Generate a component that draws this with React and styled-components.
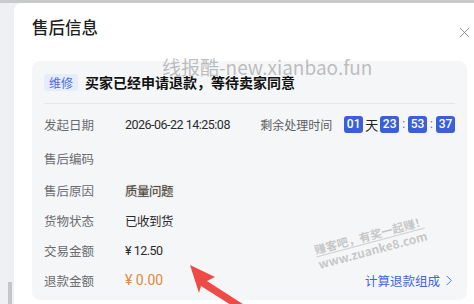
import React from 'react'
import styled, { createGlobalStyle } from 'styled-components'

const FONT = `Roboto, "Noto Sans CJK SC", sans-serif`

const ROWS = [
  { label: '发起日期', value: '2026-06-22 14:25:08', h: 34, timer: true },
  { label: '售后编码', value: '', h: 34 },
  { label: '售后原因', value: '质量问题', h: 31, smudged: true },
  { label: '货物状态', value: '已收到货', h: 29 },
  { label: '交易金额', value: '¥ 12.50', h: 30 },
  { label: '退款金额', value: '¥ 0.00', h: 30, refund: true }
]

const GlobalStyle = createGlobalStyle`
  * { box-sizing: border-box; }
  body {
    margin: 0;
    font-family: ${FONT};
    background: #eef0f3;
  }
`

const App = () => {
  return (
    <>
      <GlobalStyle />
      <Page>
        <SideRail>
          <ScrollThumb />
        </SideRail>

        <Card>
          <TitleRow>
            <Title>售后信息</Title>
            <CloseIcon viewBox='0 0 12 12'>
              <path d='M1 1L11 11M11 1L1 11' stroke='#8a8c90' strokeWidth='1' fill='none' />
            </CloseIcon>
          </TitleRow>

          <Panel>
            <StatusRow>
              <Tag>维修</Tag>
              <StatusText>买家已经申请退款，等待卖家同意</StatusText>
            </StatusRow>

            <InfoList>
              {ROWS.map(row => (
                <InfoRow key={row.label} h={row.h}>
                  <Label>{row.label}</Label>
                  <Value refund={row.refund} smudged={row.smudged}>
                    {row.value}
                  </Value>

                  {row.timer && (
                    <Timer>
                      <TimerLabel>剩余处理时间</TimerLabel>
                      <Digits>01</Digits>
                      <Unit>天</Unit>
                      <Digits>23</Digits>
                      <Colon>:</Colon>
                      <Digits>53</Digits>
                      <Colon>:</Colon>
                      <Digits>37</Digits>
                    </Timer>
                  )}

                  {row.refund && (
                    <CalcLink>
                      计算退款组成
                      <Chevron viewBox='0 0 6 12'>
                        <path d='M0.5 1L5.5 6L0.5 11' stroke='#4066d8' strokeWidth='1' fill='none' />
                      </Chevron>
                    </CalcLink>
                  )}
                </InfoRow>
              ))}
            </InfoList>
          </Panel>
        </Card>

        <Watermark>线报酷-new.xianbao.fun</Watermark>

        <Stamp>
          <StampLine>赚客吧，有奖一起赚！</StampLine>
          <StampLine url>www.zuanke8.com</StampLine>
        </Stamp>

        <Arrow viewBox='0 0 70 46'>
          <polygon points='5,5 30,17 22,21 64,48 57,52 16,26 14,33' fill='#ee4a46' />
        </Arrow>
      </Page>
    </>
  )
}

const Page = styled.div`
  position: relative;
  display: flex;
  width: 474px;
  height: 304px;
  overflow: hidden;
  background: #eef0f3;
  border-top: 3px solid #c9cacc;
`

const SideRail = styled.div`
  width: 14px;
  flex-shrink: 0;
  display: flex;
  flex-direction: column;
  justify-content: flex-end;
  padding-left: 8px;
`

const ScrollThumb = styled.div`
  width: 4px;
  height: 22px;
  background: #c3c5c8;
`

const Card = styled.div`
  flex: 1;
  display: flex;
  flex-direction: column;
  background: #fff;
  border-top-left-radius: 8px;
  padding: 10px 7px 4px 18px;
`

const TitleRow = styled.div`
  display: flex;
  align-items: center;
  justify-content: space-between;
  height: 28px;
  margin-bottom: 20px;
`

const Title = styled.h2`
  margin: 0;
  font-size: 16.5px;
  font-weight: 500;
  color: #1f1f1f;
  font-family: "Noto Sans CJK SC", sans-serif;
`

const CloseIcon = styled.svg`
  width: 11px;
  height: 11px;
  margin-top: 10px;
  margin-right: -3px;
`

const Panel = styled.div`
  flex: 1;
  background: #f5f6f8;
  border-radius: 8px;
  padding: 0 12px;
`

const StatusRow = styled.div`
  display: flex;
  align-items: center;
  gap: 7px;
  height: 43px;
  border-bottom: 1px solid #e6e7ea;
`

const Tag = styled.span`
  display: inline-flex;
  align-items: center;
  justify-content: center;
  width: 34px;
  height: 17px;
  border-radius: 3px;
  background: #e7ecfa;
  color: #4d6fd6;
  font-size: 12px;
`

const StatusText = styled.span`
  font-size: 14px;
  font-weight: 700;
  color: #111;
  font-family: "Noto Sans CJK SC", sans-serif;
`

const InfoList = styled.div`
  padding-top: 3px;
`

const InfoRow = styled.div`
  display: flex;
  align-items: center;
  height: ${({ h }) => h}px;
`

const Label = styled.span`
  width: 81px;
  flex-shrink: 0;
  font-size: 12.5px;
  color: #6a6c70;
`

const Value = styled.span`
  flex: 1;
  font-size: ${({ refund }) => (refund ? '14px' : '12.5px')};
  color: ${({ refund, smudged }) => (refund ? '#e3873c' : smudged ? '#4a4640' : '#2b2b2b')};
  letter-spacing: ${({ refund }) => (refund ? '0' : '-0.5px')};
  text-shadow: ${({ smudged }) => (smudged ? '0 0 1.5px rgba(120, 100, 70, 0.45)' : 'none')};
`

const Timer = styled.div`
  display: flex;
  align-items: center;
  gap: 2px;
`

const TimerLabel = styled.span`
  font-size: 12px;
  color: #5c5e62;
  margin-right: 10px;
`

const Digits = styled.span`
  display: inline-flex;
  align-items: center;
  justify-content: center;
  width: 19px;
  height: 17px;
  border-radius: 3px;
  background: #3a5fd8;
  color: #fff;
  font-size: 12px;
  font-weight: 500;
`

const Unit = styled.span`
  font-size: 13px;
  color: #222;
`

const Colon = styled.span`
  font-size: 12px;
  color: #666;
  padding: 0 1px;
`

const CalcLink = styled.a`
  display: flex;
  align-items: center;
  gap: 6px;
  font-size: 12.5px;
  color: #4066d8;
  cursor: pointer;
`

const Chevron = styled.svg`
  width: 6px;
  height: 11px;
  margin-right: 3px;
`

const Watermark = styled.div`
  position: absolute;
  left: 162px;
  top: 50px;
  font-size: 19px;
  color: rgba(130, 130, 130, 0.5);
  font-family: "Noto Sans CJK SC", sans-serif;
  white-space: nowrap;
  pointer-events: none;
`

const Stamp = styled.div`
  position: absolute;
  left: 320px;
  top: 240px;
  display: flex;
  flex-direction: column;
  align-items: flex-start;
  transform: rotate(-15deg);
  transform-origin: left bottom;
  pointer-events: none;
`

const StampLine = styled.span`
  font-size: ${({ url }) => (url ? '12px' : '11.5px')};
  font-weight: 700;
  color: rgba(150, 150, 150, 0.5);
  font-family: "Noto Sans CJK SC", sans-serif;
  line-height: 13px;
  white-space: nowrap;
  border-top: ${({ url }) => (url ? '1px solid rgba(150,150,150,0.4)' : 'none')};
`

const Arrow = styled.svg`
  position: absolute;
  left: 185px;
  top: 257px;
  width: 70px;
  height: 46px;
  overflow: visible;
`

export default App
